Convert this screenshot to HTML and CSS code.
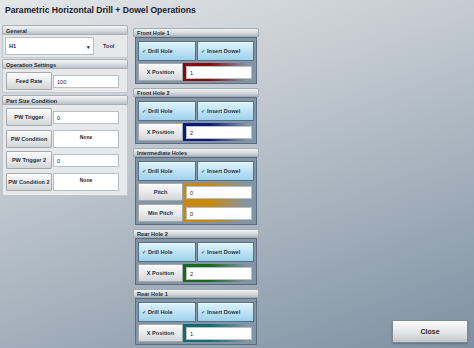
FILE: index.html
```html
<!DOCTYPE html>
<html lang="en">
<head>
    <meta charset="UTF-8">
    <meta name="viewport" content="width=device-width, initial-scale=1.0">
    <title>Parametric Horizontal Drill + Dowel Operations</title>
    <link rel="stylesheet" href="styles.css">
</head>
<body>

<div class="app">
    <h1 class="title">Parametric Horizontal Drill + Dowel Operations</h1>

    <div class="main">
        <!-- Left column -->
        <div class="col col-left">
            <section class="panel">
                <div class="panel-head">General</div>
                <div class="panel-body general">
                    <div class="select"><span>H1</span><span class="caret">&#9662;</span></div>
                    <span class="tool">Tool</span>
                </div>
            </section>

            <section class="panel">
                <div class="panel-head">Operation Settings</div>
                <div class="panel-body settings">
                    <div class="field-row">
                        <button class="btn">Feed Rate</button>
                        <div class="input">100</div>
                    </div>
                </div>
            </section>

            <section class="panel">
                <div class="panel-head">Part Size Condition</div>
                <div class="panel-body conditions">
                    <div class="field-row">
                        <button class="btn">PW Trigger</button>
                        <div class="input">0</div>
                    </div>
                    <div class="field-row">
                        <button class="btn">PW Condition</button>
                        <div class="input combo">None</div>
                    </div>
                    <div class="field-row">
                        <button class="btn">PW Trigger 2</button>
                        <div class="input">0</div>
                    </div>
                    <div class="field-row">
                        <button class="btn">PW Condition 2</button>
                        <div class="input combo">None</div>
                    </div>
                </div>
            </section>
        </div>

        <!-- Middle column: hole groups -->
        <div class="col col-mid">
            <section class="hole">
                <div class="hole-head">Front Hole 1</div>
                <div class="hole-body">
                    <div class="toggles">
                        <button class="toggle"><span class="check">&#10003;</span>Drill Hole</button>
                        <button class="toggle"><span class="check">&#10003;</span>Insert Dowel</button>
                    </div>
                    <div class="rows red">
                        <button class="btn">X Position</button>
                        <div class="input">1</div>
                    </div>
                </div>
            </section>

            <section class="hole">
                <div class="hole-head">Front Hole 2</div>
                <div class="hole-body">
                    <div class="toggles">
                        <button class="toggle"><span class="check">&#10003;</span>Drill Hole</button>
                        <button class="toggle"><span class="check">&#10003;</span>Insert Dowel</button>
                    </div>
                    <div class="rows blue">
                        <button class="btn">X Position</button>
                        <div class="input">2</div>
                    </div>
                </div>
            </section>

            <section class="hole">
                <div class="hole-head">Intermediate Holes</div>
                <div class="hole-body">
                    <div class="toggles">
                        <button class="toggle"><span class="check">&#10003;</span>Drill Hole</button>
                        <button class="toggle"><span class="check">&#10003;</span>Insert Dowel</button>
                    </div>
                    <div class="rows gold">
                        <button class="btn">Pitch</button>
                        <div class="input">0</div>
                        <button class="btn">Min Pitch</button>
                        <div class="input">0</div>
                    </div>
                </div>
            </section>

            <section class="hole">
                <div class="hole-head">Rear Hole 2</div>
                <div class="hole-body">
                    <div class="toggles">
                        <button class="toggle"><span class="check">&#10003;</span>Drill Hole</button>
                        <button class="toggle"><span class="check">&#10003;</span>Insert Dowel</button>
                    </div>
                    <div class="rows green">
                        <button class="btn">X Position</button>
                        <div class="input">2</div>
                    </div>
                </div>
            </section>

            <section class="hole">
                <div class="hole-head">Rear Hole 1</div>
                <div class="hole-body">
                    <div class="toggles">
                        <button class="toggle"><span class="check">&#10003;</span>Drill Hole</button>
                        <button class="toggle"><span class="check">&#10003;</span>Insert Dowel</button>
                    </div>
                    <div class="rows teal">
                        <button class="btn">X Position</button>
                        <div class="input">1</div>
                    </div>
                </div>
            </section>
        </div>

        <!-- Right side -->
        <div class="col col-right">
            <button class="close">Close</button>
        </div>
    </div>
</div>

</body>
</html>
```

FILE: styles.css
```css
/* Page */
* {
    box-sizing: border-box;
}

body {
    margin: 0;
    font-family: 'Liberation Sans', Arial, sans-serif;
    color: #1d2630;
    background: linear-gradient(160deg, #e4e6e8 0%, #c3cad1 35%, #9eabb8 70%, #7d90a2 100%);
    height: 100vh;
    overflow: hidden;
}

.app {
    height: 100vh;
    display: flex;
    flex-direction: column;
}

/* Title */
.title {
    margin: 0;
    padding: 5px 5px 0;
    height: 25px;
    font-size: 8.6px;
    font-weight: bold;
    color: #1a2129;
}

.main {
    flex: 1;
    min-height: 0;
    display: flex;
    gap: 5px;
    padding-left: 2px;
}

.col {
    width: 126px;
    display: flex;
    flex-direction: column;
}

.col-mid {
    padding-top: 3px;
    gap: 4px;
}

.col-right {
    flex: 1;
    width: auto;
    justify-content: flex-end;
    align-items: flex-end;
    padding: 0 6px 5px 0;
}

/* Shared buttons and inputs */
button {
    font-family: inherit;
    margin: 0;
    padding: 0;
    cursor: pointer;
}

.btn {
    background: linear-gradient(#fbfbfb, #e9eaeb 50%, #d2d5d8);
    border: 1px solid #a3a9ae;
    border-radius: 1px;
    font-size: 5.6px;
    font-weight: bold;
    color: #27303a;
    box-shadow: inset 0 1px 0 #fff;
}

.input {
    background: #fff;
    border: 1px solid #b9bec3;
    font-size: 5.6px;
    color: #1d2630;
    padding-left: 3px;
    display: flex;
    align-items: center;
}

/* Left panels */
.panel-head {
    height: 10px;
    padding-left: 3px;
    font-size: 5.6px;
    font-weight: bold;
    line-height: 10px;
    color: #1f2b38;
    background: linear-gradient(#f3f4f5, #d9dde0 55%, #b9c0c6);
    border: 1px solid #a8b0b7;
    border-radius: 2px 2px 0 0;
}

.panel-body {
    background: #e7e8e9;
    border: 1px solid #c3c8cc;
    border-top: none;
}

.general {
    height: 23px;
    display: flex;
    align-items: center;
    padding: 1px 3px 1px 2px;
    margin-bottom: 1px;
}

.select {
    width: 89px;
    height: 18px;
    background: #fff;
    border: 1px solid #b9bec3;
    font-size: 5.6px;
    font-weight: bold;
    display: flex;
    align-items: center;
    justify-content: space-between;
    padding: 0 3px 0 3px;
}

.caret {
    font-size: 5px;
    margin-top: 2px;
}

.tool {
    margin-left: 9px;
    font-size: 5.6px;
    font-weight: bold;
    color: #2b333c;
}

.settings {
    padding: 3px 0 2px 3px;
    margin-bottom: 2px;
}

.conditions {
    display: flex;
    flex-direction: column;
    gap: 3.5px;
    padding: 3px 0 4px 3px;
}

.field-row {
    display: grid;
    grid-template-columns: 46px 66px;
    column-gap: 1px;
    height: 18px;
}

.field-row .input {
    margin: 3px 0 2px;
}

.field-row .combo {
    margin: 0;
    justify-content: center;
    align-items: flex-start;
    padding: 3px 0 0;
    font-weight: bold;
    font-size: 5px;
}

/* Hole groups */
.hole-head {
    height: 9px;
    padding-left: 3px;
    font-size: 5.6px;
    font-weight: bold;
    line-height: 9px;
    color: #1f2b38;
    background: linear-gradient(#f1f2f3, #d6dadd 55%, #b3bac1);
    border: 1px solid #a3abb3;
    border-radius: 2px 2px 0 0;
}

.hole-body {
    margin: 0 2px;
    padding: 3px 2px 2px;
    background: #8395a5;
    border: 1px solid #5b6d7e;
    display: flex;
    flex-direction: column;
    gap: 2px;
}

.toggles {
    display: grid;
    grid-template-columns: 58px 1fr;
    column-gap: 1px;
    height: 20px;
}

.toggle {
    text-align: left;
    padding-left: 3px;
    font-size: 5.6px;
    font-weight: bold;
    color: #1a3146;
    background: linear-gradient(#def2fb, #bfe3f5 50%, #9fd1eb);
    border: 1px solid #4f7189;
    box-shadow: inset 0 1px 0 #f2fbff;
}

.check {
    font-size: 5px;
    margin-right: 2px;
    color: #2c4458;
}

.rows {
    display: grid;
    grid-template-columns: 45px 1fr;
    grid-auto-rows: 18px;
    row-gap: 3px;
    background: linear-gradient(90deg, transparent 0 45px, var(--field) 45px, var(--field) 62%, transparent 94%);
}

.rows .input {
    margin: 3px 2px 2px 3px;
}

.red   { --field: #8c0a0c; }
.blue  { --field: #0d1a84; }
.gold  { --field: #c98a0c; }
.green { --field: #176a1a; }
.teal  { --field: #106b74; }

/* Close button */
.close {
    width: 76px;
    height: 23px;
    font-size: 7px;
    font-weight: bold;
    color: #1f242a;
    background: linear-gradient(#fdfdfd, #e6e7e8 50%, #c4c7ca);
    border: 1px solid #7f8a94;
    border-radius: 1px;
    box-shadow: 0 1px 2px rgba(0, 0, 0, 0.25);
}
```
